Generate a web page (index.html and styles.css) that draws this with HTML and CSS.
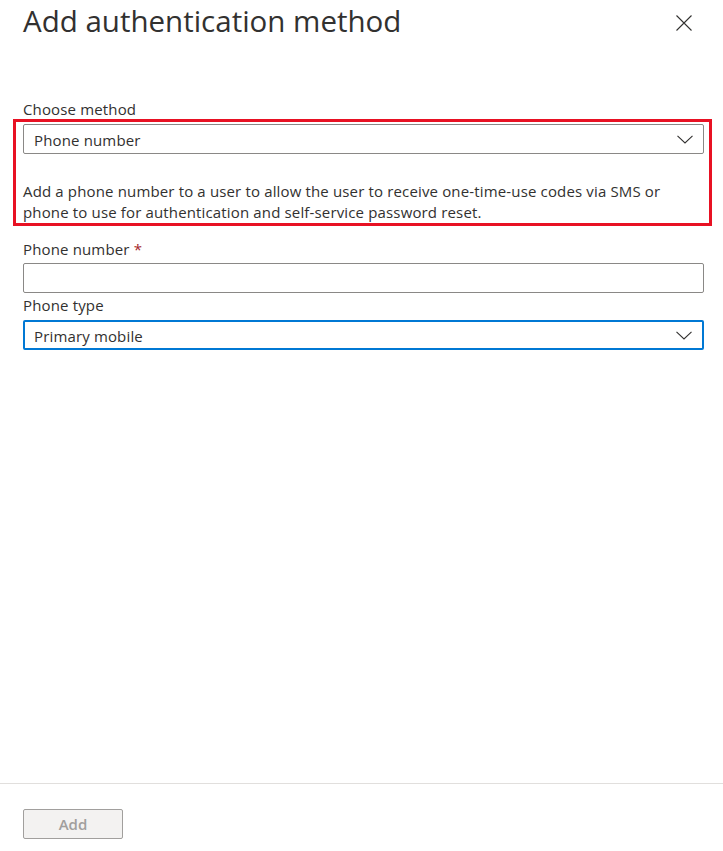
FILE: index.html
```html
<!DOCTYPE html>
<html lang="en">
  <head>
    <meta charset="UTF-8" />
    <meta name="viewport" content="width=device-width, initial-scale=1.0" />
    <title>Add authentication method</title>
    <link rel="stylesheet" href="styles.css">
  </head>
  <body>
    <div class="blade">
      <div class="blade-header">
        <h1>Add authentication method</h1>
        <button class="close-btn" aria-label="Close">
          <svg width="16" height="16" viewBox="0 0 16 16">
            <path d="M0.5 0.5 L15.5 15.5 M15.5 0.5 L0.5 15.5" stroke="#323130" stroke-width="1.1" fill="none" />
          </svg>
        </button>
      </div>

      <div class="blade-content">
        <label class="field-label">Choose method</label>
        <div class="highlight">
          <div class="dropdown">
            <span>Phone number</span>
            <svg class="chevron" width="16" height="9" viewBox="0 0 16 9">
              <path d="M0.5 0.8 L8 8 L15.5 0.8" stroke="#323130" stroke-width="1.1" fill="none" />
            </svg>
          </div>
          <p class="description">
            Add a phone number to a user to allow the user to receive one-time-use codes via SMS or
            phone to use for authentication and self-service password reset.
          </p>
        </div>

        <label class="field-label phone-label">Phone number <span class="required">*</span></label>
        <input type="text" class="text-field" />

        <label class="field-label">Phone type</label>
        <div class="dropdown focused">
          <span>Primary mobile</span>
          <svg class="chevron" width="16" height="9" viewBox="0 0 16 9">
            <path d="M0.5 0.8 L8 8 L15.5 0.8" stroke="#323130" stroke-width="1.1" fill="none" />
          </svg>
        </div>
      </div>

      <div class="blade-footer">
        <button class="add-btn" disabled>Add</button>
      </div>
    </div>
  </body>
</html>
```

FILE: styles.css
```css
* {
  box-sizing: border-box;
}
body {
  margin: 0;
  font-family: "Open Sans", "Noto Sans", sans-serif;
  color: #323130;
  background: white;
}
.blade {
  display: flex;
  flex-direction: column;
  height: 100vh;
}
.blade-header {
  display: flex;
  justify-content: space-between;
  align-items: flex-start;
  padding: 0 31px 0 23px;
}
.blade-header h1 {
  margin: 0;
  padding-top: 1px;
  font-size: 29.5px;
  font-weight: 400;
  line-height: 40px;
}
.close-btn {
  margin-top: 15px;
  padding: 0;
  border: none;
  background: none;
  width: 16px;
  height: 16px;
  cursor: pointer;
}
.close-btn svg {
  display: block;
}
.blade-content {
  flex: 1;
  padding: 56px 19px 0 23px;
  font-size: 15px;
  letter-spacing: 0.15px;
}
.field-label {
  display: block;
  padding-top: 2px;
  line-height: 20px;
}
.phone-label {
  margin-top: 11px;
}
.required {
  color: #a4262c;
}
.highlight {
  border: 3px solid #e81123;
  margin: 0 -8px 0 -10px;
  padding: 2px 5px 0 7px;
}
.dropdown {
  display: flex;
  justify-content: space-between;
  align-items: center;
  height: 30px;
  padding: 0 10px;
  border: 1px solid #8a8886;
  border-radius: 2px;
  line-height: 20px;
}
.dropdown span {
  padding-top: 2px;
}
.dropdown.focused {
  margin-top: 5px;
  padding: 0 10px 0 9px;
  border: 2px solid #0078d4;
}
.chevron {
  display: block;
}
.description {
  max-width: 660px;
  margin: 27px 0 0;
  line-height: 21px;
}
.text-field {
  display: block;
  width: 100%;
  height: 30px;
  margin-top: 4px;
  border: 1px solid #8a8886;
  border-radius: 2px;
  font: inherit;
}
.blade-footer {
  border-top: 1px solid #e1dfdd;
  padding: 25px 23px 12px;
}
.add-btn {
  width: 100px;
  height: 30px;
  background: #f3f2f1;
  border: 1px solid #a19f9d;
  border-radius: 2px;
  color: #a19f9d;
  font-family: inherit;
  font-size: 15px;
  font-weight: 600;
}
```
